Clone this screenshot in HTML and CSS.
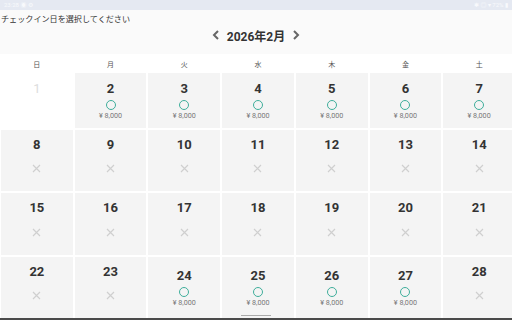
FILE: index.html
```html
<!DOCTYPE html>
<html lang="ja">
  <head>
    <meta charset="UTF-8" />
    <meta name="viewport" content="width=device-width, initial-scale=1.0" />
    <title>チェックイン日を選択</title>
    <link rel="stylesheet" href="styles.css">
  </head>
  <body>
    <div class="statusbar">
      <span>23:28 ◉ ⚙</span>
      <span>✱ ◎ ▾ 72% ▮</span>
    </div>
    <header>
      <p class="title">チェックイン日を選択してください</p>
      <nav class="month">
        <svg class="chev" width="8" height="10" viewBox="0 0 8 10"><path d="M6 1 L2 5 L6 9" /></svg>
        <span>2026年2月</span>
        <svg class="chev" width="8" height="10" viewBox="0 0 8 10"><path d="M2 1 L6 5 L2 9" /></svg>
      </nav>
    </header>
    <div class="weekdays">
      <span>日</span><span>月</span><span>火</span><span>水</span><span>木</span><span>金</span><span>土</span>
    </div>
    <main class="grid" id="grid"></main>
    <div class="handle"></div>
    <div class="navbar"></div>

    <script>
      // 空室のある日
      const open = [2, 3, 4, 5, 6, 7, 24, 25, 26, 27];
      const grid = document.getElementById("grid");
      const cross =
        '<svg width="9" height="9" viewBox="0 0 9 9"><path d="M1 1 L8 8 M8 1 L1 8" /></svg>';

      for (let d = 1; d <= 28; d++) {
        const cell = document.createElement("div");
        cell.className = "cell";
        let html = '<span class="num">' + d + "</span>";
        if (d === 1) {
          cell.classList.add("past");
          html += '<span class="spacer"></span>';
        } else if (open.includes(d)) {
          html += '<span class="ring"></span><span class="price">¥ 8,000</span>';
        } else {
          html += '<span class="cross">' + cross + "</span>";
        }
        cell.innerHTML = html;
        grid.appendChild(cell);
      }
    </script>
  </body>
</html>
```

FILE: styles.css
```css
* {
  box-sizing: border-box;
  margin: 0;
  padding: 0;
}
html,
body {
  width: 512px;
  height: 320px;
  overflow: hidden;
}
body {
  font-family: Roboto, "Noto Sans CJK JP", sans-serif;
  background-color: #fafafa;
  color: #333;
  position: relative;
}
.statusbar {
  height: 10px;
  background-color: #e5e9f2;
  color: #f8f9fc;
  font-size: 6px;
  line-height: 10px;
  display: flex;
  justify-content: space-between;
  padding: 0 4px;
}
header {
  height: 44px;
  background-color: #fafafa;
}
.title {
  font-size: 8.1px;
  line-height: 12px;
  padding-top: 3px;
  padding-left: 1px;
  color: #333;
}
.month {
  display: flex;
  justify-content: center;
  align-items: center;
  gap: 7px;
  margin-top: 2px;
  height: 16px;
  font-size: 12px;
  font-weight: 700;
  color: #333;
}
.chev path {
  fill: none;
  stroke: #666;
  stroke-width: 2;
}
.weekdays,
.grid {
  width: 515px;
  padding-left: 1px;
  display: grid;
  grid-template-columns: repeat(7, 1fr);
  column-gap: 2px;
}
.weekdays {
  height: 19px;
  background-color: #fff;
  align-items: center;
  text-align: center;
  font-size: 7px;
  color: #555;
}
.grid {
  grid-template-rows: 55px 61px 62px 61px;
  row-gap: 2px;
  background-color: #fff;
  height: 245px;
}
.cell {
  background-color: #f4f4f4;
  display: flex;
  flex-direction: column;
  align-items: center;
  justify-content: center;
}
.cell.past {
  background-color: #fff;
}
.num {
  font-size: 13px;
  font-weight: 700;
  line-height: 16px;
  color: #333;
}
.past .num {
  color: #ddd;
  font-weight: 400;
}
.spacer {
  height: 24px;
}
.ring {
  width: 10px;
  height: 10px;
  margin-top: 3px;
  border: 1.6px solid #3fae9b;
  border-radius: 50%;
}
.price {
  margin-top: 1.5px;
  font-size: 7.2px;
  line-height: 9px;
  color: #777;
}
.cross {
  height: 32px;
  display: flex;
  align-items: center;
}
.cross path {
  stroke: #cfcfcf;
  stroke-width: 1.2;
}
.handle {
  position: absolute;
  left: 241px;
  top: 315px;
  width: 30px;
  height: 1px;
  background-color: #aaa;
}
.navbar {
  height: 2px;
  background-color: #4a4a4a;
}
```
